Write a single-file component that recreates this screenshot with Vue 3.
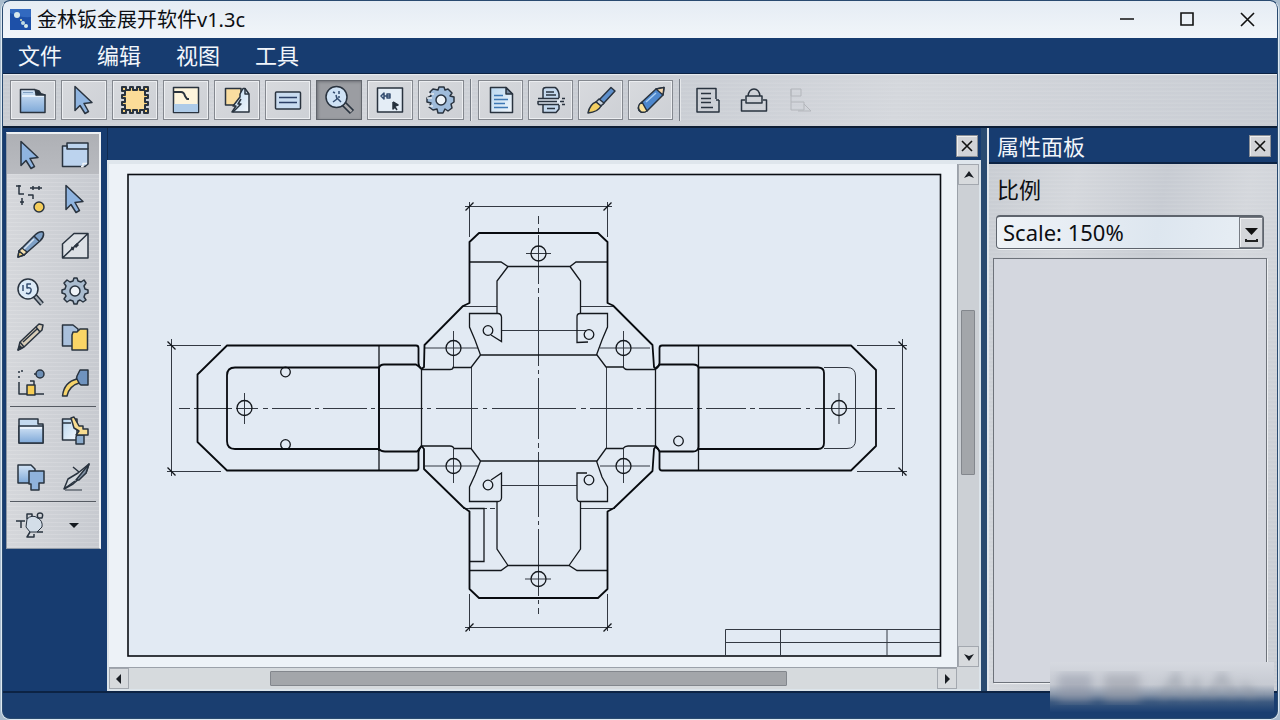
<script setup>
import { ref } from 'vue'

const menus = ['文件', '编辑', '视图', '工具']

const fileTools = [
  { icon: 'folder', label: '打开' },
  { icon: 'cursor', label: '选择' },
  { icon: 'chip', label: '板材' },
  { icon: 'bend', label: '折弯' },
  { icon: 'convert', label: '转换' },
  { icon: 'note', label: '注释' },
  { icon: 'zoomtool', label: '缩放' },
  { icon: 'pick', label: '拾取' },
  { icon: 'gear', label: '设置' }
]
const outputTools = [
  { icon: 'doc', label: '文档' },
  { icon: 'print', label: '打印' },
  { icon: 'brush', label: '画刷' },
  { icon: 'pencil', label: '铅笔' }
]
const extraTools = [
  { icon: 'report', label: '报表' },
  { icon: 'lock', label: '锁定' },
  { icon: 'stamp', label: '标记' }
]

const paletteGroups = [
  ['cursor', 'layers', 'nodes', 'cursor', 'pen', 'plane', 'zoomfive', 'cog', 'quill', 'copy', 'align', 'sweep'],
  ['folderopen', 'paste', 'shapes', 'knife'],
  ['sketch', 'more']
]

const activeTool = ref('zoomtool')
const scale = ref('150')

const holes = [
  [244.5, 408, 0, 0, 393, 424],
  [839, 408, 0, 0, 393, 424],
  [538.5, 253.5, 526, 551, 0, 0],
  [538.5, 579, 525, 551, 0, 0],
  [453.5, 348, 425, 478, 331, 367],
  [623.5, 348, 600, 650, 331, 367],
  [453.5, 466, 425, 478, 449, 483],
  [623.5, 466, 600, 650, 449, 483]
]
const pins = [
  [285.5, 372], [285.5, 444.5], [488, 330.5], [589, 334.5], [488, 485], [589, 480], [678.5, 441]
]
const ticks = [
  [469.5, 206.5, 1], [607.5, 206.5, 1], [469.5, 627.5, 1], [607.5, 627.5, 1],
  [171.5, 345.5, -1], [171.5, 471.5, -1], [902.5, 345.5, -1], [902.5, 471.5, -1]
]
</script>

<template>
  <div class="desktop">
    <svg class="sprite" aria-hidden="true">
      <defs>
        <linearGradient id="blue" x1="0" y1="0" x2="0" y2="1">
          <stop offset="0" stop-color="#d3e4f6" />
          <stop offset="1" stop-color="#7fa9d8" />
        </linearGradient>
        <linearGradient id="pale" x1="0" y1="0" x2="1" y2="1">
          <stop offset="0" stop-color="#b9d7f0" />
          <stop offset="1" stop-color="#f2f7fc" />
        </linearGradient>
        <filter id="soft"><feGaussianBlur stdDeviation="5" /></filter>
      </defs>
      <symbol id="folder" viewBox="0 0 32 32">
        <path d="M3.500 5.500H18L19 9L28 11V28.500H3.500Z" fill="url(#blue)" />
        <path d="M5 12H27" stroke="#f5faff" />
        <path d="M19 6V11H28L24 10L22 7Z" fill="#24303d" />
        <path d="M6 8.500H16" stroke="#7f9fc2" stroke-width="1" />
      </symbol>
      <symbol id="cursor" viewBox="0 0 32 32">
        <path d="M7 2.500V26.500L12 21.500L17 29.500L20.500 27.500L16 19.500L24 18.500Z" fill="#8fb4e0" />
      </symbol>
      <symbol id="chip" viewBox="0 0 32 32">
        <path fill="#f7d27c" stroke-width="2" d="M3 3h4v3h4v-3h3v3h4v-3h3v3h4v-3h4v4h-3v4h3v3h-3v4h3v3h-3v4h3v4h-4v-3h-4v3h-3v-3h-4v3h-3v-3h-4v3h-4v-4h3v-4h-3v-3h3v-4h-3v-3h3v-4h-3z" />
        <rect x="7" y="7" width="18" height="18" fill="#fbdc98" stroke="none" />
      </symbol>
      <symbol id="bend" viewBox="0 0 32 32">
        <rect x="3.500" y="3.500" width="25" height="25" fill="#fdf4dc" />
        <path d="M4 20H28V28H4Z" fill="#aecbe8" stroke="none" />
        <path d="M4 8H11Q14 8 15 12L17 15H19" fill="none" stroke-width="2" />
      </symbol>
      <symbol id="convert" viewBox="0 0 32 32">
        <path d="M4.500 4.500H20V21H4.500Z" fill="#f9dda0" />
        <path d="M19 10L22 4.500H24L28 10V28H11L15 22H12L19 13Z" fill="url(#pale)" />
        <path d="M24 4V10H28M20 15L17 20H20L12 28" fill="none" />
      </symbol>
      <symbol id="note" viewBox="0 0 32 32">
        <rect x="3.500" y="8" width="25" height="17" rx="1" fill="#c9dcf0" />
        <path d="M7 13.500H25M7 18.500H25" stroke="#2b3f66" />
      </symbol>
      <symbol id="zoomtool" viewBox="0 0 32 32">
        <path d="M20 19L29 28" stroke-width="6" /><path d="M21 20L28.500 27.500" stroke="#a9a9ac" stroke-width="2.500" />
        <circle cx="13.500" cy="13" r="10.500" fill="#cfe2f5" />
        <path d="M10 8L12 9M16 7V10M13 11L14 15L10 18M14 14L18 18M17 13H15" fill="none" stroke="#344d70" />
      </symbol>
      <symbol id="pick" viewBox="0 0 32 32">
        <rect x="3.500" y="4" width="25" height="24" fill="#e4edf6" />
        <path d="M7 12L10 9V15ZM10 12H16M13 10H16V14H13Z" fill="none" stroke="#344d70" />
        <path d="M19 18V25L21 23L23 26M19 18L24 21L21 22" fill="#24303d" />
      </symbol>
      <symbol id="gear" viewBox="0 0 32 32">
        <path fill="#9fbcdb" d="M13 6L14 3H19L20 6L23 5L27 9L25 12L29 13V18L26 20L27 24L23 27L20 25L18 29H13L12 25L8 26L4 23L6 19L2 18V14L6 12L5 8L8 5Z" />
        <circle cx="16" cy="16" r="5" fill="#edf3f8" />
        <path d="M3 10H9M2 14H7M3 22H8" stroke="#e6eaf0" />
      </symbol>
      <symbol id="doc" viewBox="0 0 32 32">
        <path d="M5.500 3.500H21L27.500 10V28.500H5.500Z" fill="url(#pale)" />
        <path d="M21 3.500V10H27.500Z" fill="#7b8ea4" />
        <path d="M9 11.500H18M9 15.500H23M9 19.500H20M9 23.500H23" stroke="#3e78b4" />
      </symbol>
      <symbol id="print" viewBox="0 0 32 32">
        <path d="M8 14V6Q8 3.500 11 3.500H20Q23 5 24 10V14" fill="#c4d8ed" />
        <path d="M8 21V28.500H21L24 25V21" fill="#c4d8ed" />
        <path d="M4 15H26V20H4Z" fill="#dde5ee" stroke="none" />
        <path d="M11 8H19M11 11H21M3 14.500H24M27 14.500H30M3 20.500V17.500H22M25 17.500H29M3 20.500H24M27 20.500H30M12 24.500H20" fill="none" />
      </symbol>
      <symbol id="brush" viewBox="0 0 32 32">
        <path d="M14 16L26 3.500L30 7L18 20Z" fill="#5d8fcb" />
        <path d="M11 18L14 15L19 19L16 22Z" fill="#c8d3df" />
        <path d="M3 29Q5 20 11 18L16 22Q13 28 3 29Z" fill="#f3cf62" />
      </symbol>
      <symbol id="pencil" viewBox="0 0 32 32">
        <path d="M3.500 23Q4 20 7 18L21 5L29 3.500L28 11L12 27Q9 29 6 28Q3 26 3.500 23Z" fill="#4d87cd" />
        <path d="M3.500 23Q4 20 7 18L12 27Q9 29 6 28Q3 26 3.500 23Z" fill="#fae29a" />
        <path d="M21 5L29 3.500L28 11Z" fill="#f3d5ae" />
        <path d="M11 18L21 9" stroke="#a9cdf2" />
      </symbol>
      <symbol id="report" viewBox="0 0 32 32">
        <path d="M24 15V4.500H5V28H27V16" fill="none" /><path d="M9 9.500H19M9 14.500H19M9 18.500H19M9 23.500H21M24 16H27" />
      </symbol>
      <symbol id="lock" viewBox="0 0 32 32">
        <path d="M8 19V12H24V19ZM10 12Q11 5 16 5T22 12M7 16H3.500V27H28.500V16H25" fill="none" />
      </symbol>
      <symbol id="stamp" viewBox="0 0 32 32">
        <path d="M7 5H17V12H7ZM7 5V26H20V18H7M20 20L27 27H14" fill="none" stroke="#b3b6bb" stroke-width="1" />
      </symbol>

      <symbol id="layers" viewBox="0 0 32 32">
        <path d="M8 9V4H29V10" fill="#bdd4ee" />
        <path d="M3.500 7H8V10H29V25L26 27.500H3.500Z" fill="#bcd3ee" />
        <path d="M22 27.500H24V24.500H28" stroke="#edf2f7" fill="none" />
      </symbol>
      <symbol id="nodes" viewBox="0 0 32 32">
        <path d="M5 2V11H10M16 5H28M19 3V7M25 3V7M8 15V22M6 19H10M14 12H19V16M2 3H7" fill="none" />
        <circle cx="25" cy="24" r="5" fill="#f4cd5b" />
      </symbol>
      <symbol id="pen" viewBox="0 0 32 32">
        <path d="M4 28L5 22L20 7Q25 2 29 3Q31 7 26 12L10 26Z" fill="#7fa1c7" />
        <path d="M4 28L5 22L10 26Z" fill="#f5d47b" /><path d="M5 22L8 19L13 23L10 26Z" fill="#f6e1b0" />
        <path d="M20 7L25 12" /><path d="M10 20L20 10" stroke="#d5e2f0" />
      </symbol>
      <symbol id="plane" viewBox="0 0 32 32">
        <path d="M3.500 15L15 4.500H29V29H3.500ZM3.500 29L29 4.500" fill="#dce0e5" />
        <path d="M12 19L15 20M16 18L19 15" stroke-width="3" />
      </symbol>
      <symbol id="zoomfive" viewBox="0 0 32 32">
        <path d="M20 20L28 29" stroke-width="5" /><path d="M21 21L28 29" stroke="#a8b0b9" stroke-width="2" />
        <circle cx="14" cy="14" r="10" fill="#dceaf7" />
        <path d="M17 9H13V13Q18 12 17 16T12 18M9 10V16" fill="none" stroke="#344d70" />
      </symbol>
      <symbol id="cog" viewBox="0 0 32 32">
        <path fill="#aabccf" d="M14 6L15 3H18L19 6L22 7L25 5L27 8L25 11L26 14L29 15V18L26 19L25 22L27 25L24 27L21 25L19 26L18 29H15L14 26L11 25L8 27L5 24L7 21L6 19L3 18V15L6 14L7 11L5 8L8 5L11 7Z" />
        <circle cx="16" cy="16" r="5" fill="#eef3f8" />
      </symbol>
      <symbol id="quill" viewBox="0 0 32 32">
        <path d="M4 29L6 21L25 3L29 4L28 9L10 26Z" fill="#d8cdb8" /><path d="M6 21L10 26M22 6L26 11M9 21L23 8" /><path d="M4 29L6 25L8 27Z" fill="#333" />
      </symbol>
      <symbol id="copy" viewBox="0 0 32 32">
        <path d="M3.500 4H14L19 8V25H3.500Z" fill="#a9c0dc" />
        <path d="M14 11H18L21 8H28.500V29H13V14Z" fill="#fad566" />
      </symbol>
      <symbol id="align" viewBox="0 0 32 32">
        <path d="M5 4V6M5 9V11M7 4H9M5 15V27H30M16 14H20V18" fill="none" />
        <circle cx="26" cy="7" r="4" fill="#6e8fb5" /><path d="M20 7H22" />
        <rect x="13" y="18" width="8" height="10" fill="#f8ce55" />
      </symbol>
      <symbol id="sweep" viewBox="0 0 32 32">
        <path d="M18 9L21 3H29V18H22L17 14Z" fill="#6f93bf" />
        <path d="M3.500 29Q5 15 18 12L20 16Q10 19 8 29Z" fill="#f7d46b" />
      </symbol>
      <symbol id="folderopen" viewBox="0 0 32 32">
        <path d="M5 28V4H24V9H29V28Z" fill="#c5daf0" /><path d="M5 11H29V28H5Z" fill="url(#blue)" /><path d="M6 13H28" stroke="#f4f9ff" />
      </symbol>
      <symbol id="paste" viewBox="0 0 32 32">
        <path d="M3.500 4H18V25H3.500Z" fill="url(#pale)" /><path d="M4 8H12" />
        <path d="M18 20H25V29H17V22Z" fill="#8caccd" />
        <path d="M12 3L15 2L20 11H24V14H29V20H17L20 16L15 13Z" fill="#f8dc90" />
      </symbol>
      <symbol id="shapes" viewBox="0 0 32 32">
        <path d="M4 4H17L21 8V22H4Z" fill="url(#blue)" />
        <path d="M15 10H30V22H25V29H17V23H15Z" fill="#8fb2db" />
      </symbol>
      <symbol id="knife" viewBox="0 0 32 32">
        <path d="M5 28L9 18L19 12L30 3L27 12L14 23Z" fill="#d2d7dd" />
        <path d="M14 6L20 11M17 19L30 3L27 12L20 19ZM5 28L16 20" fill="#8495a8" />
        <path d="M6 29H23" stroke-width="1" />
      </symbol>
      <symbol id="sketch" viewBox="0 0 32 32">
        <path d="M13 10Q18 5 24 9Q29 12 28 18L23 23H16L12 18Z" fill="#d3dde8" stroke-width="1" />
        <path d="M2 12H11M7 12V19M13 10V5H18V8M24 9Q22 4 26 4T28 9ZM16 23L13 28H20V25M23 23H29" fill="none" />
      </symbol>
      <symbol id="more" viewBox="0 0 32 32"><path d="M10 14H20L15 19Z" fill="#151a20" stroke="none" /></symbol>
    </svg>

    <div class="window">
      <header class="titlebar">
        <svg class="logo" viewBox="0 0 21 21" aria-hidden="true">
          <rect width="21" height="21" fill="#1d50a8" />
          <path d="M0 0H21V8Q10 9 0 4Z" fill="#3269bf" />
          <circle cx="7" cy="6" r="3" fill="#d9e9ec" /><circle cx="11" cy="11" r="1" fill="#e8e9ae" />
          <circle cx="13" cy="14" r="2" fill="#bfdbe5" /><circle cx="16" cy="17" r="2" fill="#d9ebe8" />
        </svg>
        <h1>金林钣金展开软件v1.3c</h1>
        <div class="controls">
          <button aria-label="最小化"><svg viewBox="0 0 16 16"><path d="M1 7H15" /></svg></button>
          <button aria-label="最大化"><svg viewBox="0 0 16 16"><path d="M2 1H14V13H2Z" /></svg></button>
          <button aria-label="关闭"><svg viewBox="0 0 16 16"><path d="M2 1L15 14M15 1L2 14" /></svg></button>
        </div>
      </header>

      <nav class="menubar">
        <button v-for="m in menus" :key="m">{{ m }}</button>
      </nav>

      <div class="toolbar metal">
        <div class="group first">
          <button v-for="t in fileTools" :key="t.icon" class="tool" :class="{ active: activeTool === t.icon }" :aria-label="t.label" @click="activeTool = t.icon">
            <svg class="icon"><use :href="'#' + t.icon" /></svg>
          </button>
        </div>
        <div class="group second">
          <button v-for="t in outputTools" :key="t.icon" class="tool" :aria-label="t.label">
            <svg class="icon"><use :href="'#' + t.icon" /></svg>
          </button>
        </div>
        <div class="group third">
          <button v-for="t in extraTools" :key="t.icon" class="flat" :aria-label="t.label">
            <svg class="icon"><use :href="'#' + t.icon" /></svg>
          </button>
        </div>
      </div>

      <main class="workspace">
        <aside class="side">
          <div class="palette">
            <div v-for="(g, gi) in paletteGroups" :key="gi" class="pgroup">
              <button v-for="(icon, i) in g" :key="i" :aria-label="icon">
                <svg class="icon"><use :href="'#' + icon" /></svg>
              </button>
            </div>
          </div>
        </aside>

        <section class="document">
          <div class="dochead"><button class="close" aria-label="关闭图纸"><svg viewBox="0 0 12 12"><path d="M1 1L11 11M11 1L1 11" /></svg></button></div>
          <div class="frame">
            <svg class="drawing" viewBox="109 164 848 503" role="img" aria-label="钣金展开图">
              <rect class="sheet" x="128" y="174.500" width="812.500" height="481.500" />
              <g class="thin">
                <path d="M725.500 656V629.500H940M725.500 642.500H940M780.500 629.500V656M887 629.500V656" />
                <path d="M469.500 202V237M607.500 202V237M465 206.500H612M469.500 594V631M607.500 594V631M465 627.500H612" />
                <path d="M167 345.500H221M167 471.500H221M171.500 339V476M857 345.500H907M857 471.500H907M902.500 339V476" />
                <path d="M179 408.500H190M194 408.500H232M236 408.500H258M263 408.500H268M272 408.500H311M315 408.500H319M323 408.500H367M371 408.500H375M380 408.500H423M427 408.500H431M436 408.500H478M483 408.500H487M492 408.500H576M581 408.500H586M590 408.500H633M637 408.500H641M646 408.500H693M697 408.500H702M706 408.500H746M750 408.500H755M759 408.500H801M806 408.500H810M815 408.500H882M887 408.500H895" />
                <path d="M538.500 216V224M538.500 228V232M538.500 235V284M538.500 288V293M538.500 297V366M538.500 370V374M538.500 378V439M538.500 443V448M538.500 452V517M538.500 521V525M538.500 529V596M538.500 600V604M538.500 608V614" />
                <path d="M471.500 367V449M606.500 367V449M502 330.500H586M502 485.500H577M463 306.500H497M580 306.500H614M463 508.500H487M490 508.500H495M580 508.500H615" />
                <path d="M824 367.500H847Q855.500 367.500 855.500 376V440Q855.500 448.500 847 448.500H824" />
                <path v-for="([x, y, a, b, c, d], i) in holes" :key="i" :d="(b ? `M${a} ${y}H${b}` : '') + (d ? `M${x} ${c}V${d}` : '')" />
              </g>
              <g class="medium">
                <path d="M379 345.500V470.500M698.500 345.500V470.500M421.500 369V446M655.500 369V446" />
                <path d="M469.500 262H501L508 266.500H570L576 262H607.500M508 266.500L497 281V313M570 266.500L580.500 281V313" />
                <path d="M469.500 570.500H501L508 565.500H569L577 570.500H607.500M508 565.500L497 549V502M569 565.500L580.500 549V502" />
                <path d="M469.500 508.500H484V561.500H469.500" />
                <path d="M491 335L501.500 341.500V317Q501 313.500 498 313.500H469.500V327L475 340L480.500 355" />
                <path d="M588 342L577 342.500V317Q577 313.500 580 313.500H607.500V327L602 340L596.500 355" />
                <path d="M491 480L501.500 473V498Q501 501.500 498 501.500H469.500V487L475 475L480.500 461" />
                <path d="M587 473H577V498Q577 501.500 580 501.500H607.500V487L602 477L596.500 461" />
                <path d="M421.500 369.500H450Q453 369.500 453 367.500H471L480.500 355H597L606 367H623Q625 369.500 627 369.500H655.500" />
                <path d="M421.500 446H450Q453 446 454 448.500H471L480.500 461H597L606 448.500H623Q625 446 628 446H655.500" />
                <circle v-for="([x, y], i) in holes" :key="'h' + i" :cx="x" :cy="y" r="7.500" />
                <circle v-for="([x, y], i) in pins" :key="'p' + i" :cx="x" :cy="y" r="4.800" />
                <path v-for="([x, y, d], i) in ticks" :key="'t' + i" :d="`M${x - 4} ${y + 4 * d}L${x + 4} ${y - 4 * d}`" />
              </g>
              <g class="thick">
                <path d="M421.500 369Q418.500 367 418.500 363V348Q418.500 345.500 416 345.500H227L197.500 374.500V442L227 470.500H416Q418.500 470.500 418.500 468V452Q418.500 449 421.500 446" />
                <path d="M655.500 369Q659 367 659.500 363V348Q659.500 345.500 662 345.500H851L876 370V446L851 470.500H662Q659.500 470.500 659.500 468V452Q659 449 655.500 446" />
                <path d="M379 367.500H235Q227 367.500 227 375.500V441Q227 449 235 449H379M698.500 367.500H818Q824 367.500 824 373V443Q824 449 818 449H698.500" />
                <path d="M379 451V368Q380 364.500 384 364.500H416L421 368M379 449Q381 451.500 385 451.500H417L421 447" />
                <path d="M656 368L660 364.500H693Q698 364.500 698.500 368V447Q698 451.500 693 451.500H660L656 447" />
                <path d="M421.500 369L424 367L424.500 345L463 306L469.500 303V242L479 233H598L607.500 242V303L613 305.500L652.500 345L654 367L656 369" />
                <path d="M421.500 446L424 449V469L463 507L469.500 511.500V589L479 598H598L607.500 589V511.500L614 508L652.500 471L654 449L656 446" />
              </g>
            </svg>
            <div class="scroll vertical">
              <button aria-label="向上"><svg viewBox="0 0 12 12"><path d="M1 9L6 2L11 9L6 7Z" /></svg></button>
              <div class="track"><i class="v1"></i><b class="v2"></b><i class="v3"></i></div>
              <button aria-label="向下"><svg viewBox="0 0 12 12"><path d="M1 3L6 10L11 3L6 5Z" /></svg></button>
            </div>
            <div class="scroll horizontal">
              <button aria-label="向左"><svg viewBox="0 0 12 12"><path d="M8 1V11L3 6Z" /></svg></button>
              <div class="track"><i class="h1"></i><b class="h2"></b><i class="h3"></i></div>
              <button aria-label="向右"><svg viewBox="0 0 12 12"><path d="M4 1V11L9 6Z" /></svg></button>
            </div>
            <div class="corner"></div>
          </div>
        </section>

        <aside class="properties metal">
          <div class="prophead">
            <h2>属性面板</h2>
            <button class="close" aria-label="关闭面板"><svg viewBox="0 0 12 12"><path d="M1 1L11 11M11 1L1 11" /></svg></button>
          </div>
          <label for="scale">比例</label>
          <div class="selectbox">
            <select id="scale" v-model="scale">
              <option value="100">Scale: 100%</option>
              <option value="150">Scale: 150%</option>
              <option value="200">Scale: 200%</option>
            </select>
            <span class="arrow"><svg viewBox="0 0 20 28" aria-hidden="true"><path d="M4 9H17L10.500 16Z" /><path d="M5 20V22H16V20" class="tray" /></svg></span>
          </div>
          <div class="well"></div>
        </aside>
      </main>

      <footer class="status"></footer>
    </div>

    <svg class="haze" viewBox="0 0 230 56" aria-hidden="true">
      <defs>
        <linearGradient id="fade" x1="0" y1="0" x2="0" y2="1">
          <stop offset="0" stop-color="#d6d9e0" /><stop offset="0.450" stop-color="#c6cad2" /><stop offset="0.650" stop-color="#8795a9" /><stop offset="0.800" stop-color="#3d5a80" /><stop offset="1" stop-color="#1b3f72" />
        </linearGradient>
      </defs>
      <rect width="224" height="50" fill="url(#fade)" />
      <g filter="url(#soft)" opacity="0.500">
        <rect x="8" y="12" width="34" height="28" fill="#8f95a6" />
        <rect x="54" y="12" width="36" height="28" fill="#9599a4" />
        <path d="M112 36L126 14L134 36M146 16V36M160 34L172 14L184 34M192 22L204 34" stroke="#8c939e" stroke-width="7" fill="none" />
      </g>
    </svg>
  </div>
</template>

<style>
body { background: #a9bccd; }
</style>

<style scoped>
* { box-sizing: border-box; }
.desktop {
  position: relative;
  min-height: 100vh;
  display: flex;
  padding: 0 1px 1px;
  font-family: "Noto Sans", "Noto Sans CJK SC", sans-serif;
  color: #0c0e12;
}
.sprite { position: absolute; width: 0; height: 0; }
button { font: inherit; color: inherit; margin: 0; padding: 0; border: 0; background: none; display: flex; align-items: center; justify-content: center; }
h1, h2 { margin: 0; font-weight: 400; }
.window {
  flex: 1;
  min-width: 0;
  display: flex;
  flex-direction: column;
  border: 1px solid #dfeaf2;
  border-top-color: #294a70;
  padding: 0 1px 1px;
  border-radius: 9px;
  overflow: hidden;
  background: #294a70;
}
.metal {
  background:
    repeating-linear-gradient(180deg, rgba(255,255,255,.08) 0 1px, transparent 1px 3px, rgba(255,255,255,.04) 3px 4px),
    linear-gradient(100deg, #c8ccd2, #d4d7dc 25%, #c7cbd2 48%, #d4d7dc 70%, #c8ccd3);
}
.icon { width: 32px; height: 32px; stroke: #29333f; stroke-width: 1.5; stroke-linejoin: round; overflow: visible; }

.titlebar { height: 37px; flex: none; display: flex; align-items: center; padding-left: 7px; background: linear-gradient(#e5ecf4, #f1f5f9); border-radius: 7px 7px 0 0; }
.logo { width: 21px; height: 21px; margin-right: 6px; }
h1 { font-size: 20px; line-height: 28px; flex: 1; white-space: nowrap; }
.controls { display: flex; }
.controls button { width: 60px; height: 36px; }
.controls svg { width: 16px; height: 16px; fill: none; stroke: #111; stroke-width: 1.6; }

.menubar { height: 36px; flex: none; display: flex; gap: 35px; padding: 0 0 2px 15px; background: #173c70; border-bottom: 1px solid #0c2344; color: #f2f6fb; font-size: 22px; line-height: 32px; }

.toolbar { height: 54px; flex: none; display: flex; align-items: center; border-top: 1px solid #e7ebef; border-bottom: 2px solid #0c1d35; padding: 0 7px 1px; }
.group { display: flex; align-items: center; gap: 5px; }
.group.second, .group.third { border-left: 1px solid #777d86; box-shadow: inset 1px 0 #e6e8eb; padding-left: 7px; margin-left: 6px; height: 42px; }
.tool { width: 46px; height: 40px; border: 1px solid #84888f; box-shadow: inset 1px 1px #eceef1, inset -1px -1px #eceef1; background: linear-gradient(135deg, #d8dade, #cdd0d5); }
.second .tool { width: 45px; }
.tool.active { background: #9b9da2; box-shadow: inset 1px 1px 3px #6f7278; border-color: #62666d; }
.group.third { padding-left: 12px; gap: 14px; }
.flat { width: 32px; height: 40px; }

.workspace { flex: 1; min-height: 0; display: grid; grid-template-columns: 104px minmax(0, 1fr) 290px; }
.side { padding: 4px 6px 0 3px; background: #173c70; }
.palette { border: 1px solid #8f99a6; border-top: 2px solid #eef1f4; border-right: 2px solid #f0f2f4; background: repeating-linear-gradient(180deg, rgba(255,255,255,.14) 0 1px, transparent 1px 4px), linear-gradient(90deg, #d5d7db, #c7cad0); }
.pgroup { display: grid; grid-template-columns: 45px 45px; grid-auto-rows: 46px; padding: 1px 0 2px; background: linear-gradient(#555a62, #555a62) bottom / 86px 1px no-repeat; }
.pgroup:first-child {
  padding: 0 0 1px;
  grid-template-rows: 42px;
  background:
    linear-gradient(#555a62, #555a62) bottom / 86px 1px no-repeat,
    linear-gradient(#aeb0b5, #b9bbc0) top / 100% 40px no-repeat;
}
.pgroup:last-child { background: none; padding: 0; }

.document { display: flex; flex-direction: column; min-width: 0; margin-right: 6px; }
.dochead { height: 32px; flex: none; display: flex; align-items: center; justify-content: flex-end; padding: 3px 3px 0 0; border-left: 1px solid #0f2a50; background: #173c70; }
.document, .prophead, .menubar { background: #173c70; }
.close { width: 22px; height: 22px; background: #d2d3d7; border: 1px solid #8b8f96; box-shadow: inset 1px 1px #eee; }
.close svg { width: 12px; height: 12px; stroke: #111; stroke-width: 1.6; fill: none; }
.frame { flex: 1; min-height: 0; display: grid; grid-template-columns: minmax(0, 1fr) 22px; grid-template-rows: minmax(0, 1fr) 22px; border: 2px solid #dce4ea; border-top: 4px solid #dfe6ec; background: #edf2f7; }
.drawing { width: 100%; height: 100%; display: block; background: #edf2f7; }
.sheet { fill: #e2eaf3; stroke: #0a0d12; stroke-width: 1.6; }
.thin { fill: none; stroke: #333942; stroke-width: 1; }
.medium { fill: none; stroke: #14181d; stroke-width: 1.3; }
.thick { fill: none; stroke: #080b0f; stroke-width: 1.8; stroke-linejoin: round; }
.scroll { display: flex; background: #ccd0d5; border: 0 solid #9ba1a9; }
.scroll button { width: 21px; height: 21px; flex: none; background: #d7dadd; border: 1px solid #a3a8af; }
.scroll.horizontal button { width: 20px; }
.scroll svg { width: 12px; height: 12px; fill: #1a1e24; }
.scroll.vertical { flex-direction: column; border-left-width: 1px; }
.scroll.horizontal { border-top-width: 1px; background: #d6dadd; }
.track { flex: 1; display: flex; min-height: 0; }
.track b { background: #a3a6aa; border: 1px solid #83878d; border-radius: 1px; }
.vertical .track { flex-direction: column; padding: 0 4px 0 3px; }
.horizontal .track { padding: 3px 0; }
.v1 { flex: 126; } .v2 { flex: 163; } .v3 { flex: 172; }
.h1 { flex: 141; } .h2 { flex: 517; } .h3 { flex: 150; }
.corner { background: #d3d7db; }

.properties { display: flex; flex-direction: column; border-left: 2px solid #e1e6eb; min-height: 0; }
.prophead { height: 36px; flex: none; display: flex; align-items: center; justify-content: space-between; padding: 2px 6px 0 8px; color: #f2f6fb; border-bottom: 2px solid #0c2344; }
h2 { font-size: 22px; line-height: 32px; }
label { font-size: 22px; line-height: 32px; padding: 9px 8px 10px; }
.selectbox { position: relative; margin: 0 13px 0 7px; height: 34px; flex: none; }
select { appearance: none; width: 100%; height: 34px; font-family: inherit; font-size: 22px; line-height: 28px; color: #0c0e12; padding: 0 30px 2px 6px; border: 1px solid #5e646d; border-top-width: 2px; border-radius: 4px; background: linear-gradient(100deg, #eff3f7, #dde6ef 60%, #e9eff5); box-shadow: 0 1px #eef1f3; }
.arrow { position: absolute; right: 1px; top: 2px; bottom: 1px; width: 24px; border: 1px solid #777c84; background: #d4d6da; pointer-events: none; display: flex; align-items: center; justify-content: center; box-shadow: inset 1px 1px #f0f1f3; }
.arrow svg { width: 20px; height: 28px; fill: #111; }
.arrow .tray { fill: none; stroke: #222; stroke-width: 2; }
.well { flex: 1; margin: 9px 10px 8px 4px; border: 1px solid #6d727a; background: #d4d7df; box-shadow: 1px 1px #eef0f2; }

.status { height: 27px; flex: none; border-top: 2px solid #0c2344; background: #1a3e70; border-radius: 0 0 7px 7px; }
.haze { position: absolute; right: 0; bottom: 3px; width: 230px; height: 56px; pointer-events: none; }
</style>
